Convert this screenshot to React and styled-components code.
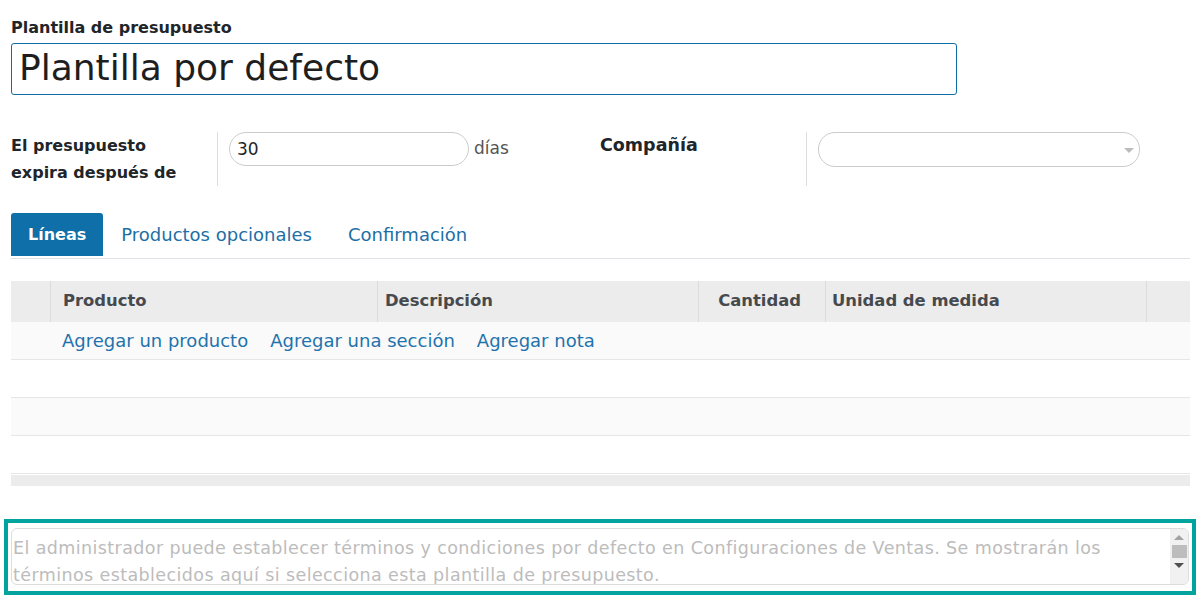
import styled, { createGlobalStyle } from "styled-components";

const GlobalStyle = createGlobalStyle`
  body {
    margin: 0;
    background: #fff;
    font-family: "DejaVu Sans", "Open Sans", sans-serif;
    color: #212529;
  }
`;

const Page = styled.div`
  padding: 17px 14px 0 11px;
`;

const FieldLabel = styled.div`
  font-size: 16px;
  font-weight: 700;
  line-height: 21px;
  margin-bottom: 5px;
`;

const NameInput = styled.div`
  box-sizing: border-box;
  width: 946px;
  height: 52px;
  border: 1px solid #0f6ea8;
  border-radius: 3px;
  padding: 0 7px;
  font-size: 36px;
  line-height: 48px;
  color: #1e1e1e;
`;

const SettingsRow = styled.div`
  display: flex;
  margin-top: 37px;
`;

const Group = styled.div`
  display: flex;
  width: ${(p) => p.width}px;
`;

const GroupLabel = styled.div`
  width: 206px;
  font-size: ${(p) => p.size || 16}px;
  font-weight: 700;
  line-height: 27px;
  white-space: nowrap;
`;

const GroupBody = styled.div`
  display: flex;
  align-items: flex-start;
  border-left: 1px solid #ddd;
  padding-left: 11px;
  min-height: ${(p) => p.sep}px;
`;

const Pill = styled.div`
  box-sizing: border-box;
  width: ${(p) => p.width}px;
  height: ${(p) => p.height}px;
  border: 1px solid #ccc;
  border-radius: 17px;
  padding: 0 7px;
  font-size: 17px;
  line-height: 32px;
  position: relative;
`;

const Caret = styled.span`
  position: absolute;
  right: 5px;
  top: 15px;
  border-left: 5px solid transparent;
  border-right: 5px solid transparent;
  border-top: 5px solid #bbb;
`;

const Unit = styled.span`
  font-size: 17px;
  color: #555;
  margin: 6px 0 0 5px;
`;

const Tabs = styled.div`
  display: flex;
  margin-top: 27px;
  border-bottom: 1px solid #dee2e6;
  height: 46px;
  box-sizing: border-box;
`;

const Tab = styled.div`
  height: 43px;
  padding: 0 ${(p) => (p.active ? 17 : 18)}px;
  font-size: ${(p) => (p.active ? 16 : 18)}px;
  line-height: 44px;
  border-radius: 3px 3px 0 0;
  white-space: nowrap;
  color: ${(p) => (p.active ? "#fff" : "#1d6fa6")};
  background: ${(p) => (p.active ? "#0f6fa8" : "transparent")};
  font-weight: ${(p) => (p.active ? 700 : 400)};
`;

const Table = styled.div`
  margin-top: 22px;
  width: 1179px;
`;

const cols = "39px 327px 321px 127px 321px 44px";

const HeadRow = styled.div`
  display: grid;
  grid-template-columns: ${cols};
  height: 41px;
  background: #ececec;
`;

const HeadCell = styled.div`
  border-left: ${(p) => (p.first ? "none" : "1px solid #dcdcdc")};
  font-size: 16.4px;
  font-weight: 700;
  color: #464a4f;
  line-height: 40px;
  padding: 0 ${(p) => (p.right ? "24px" : "4px")} 0 ${(p) => (p.right ? "0" : `${p.indent || 6}px`)};
  text-align: ${(p) => (p.right ? "right" : "left")};
  white-space: nowrap;
`;

const BodyRow = styled.div`
  display: flex;
  gap: 22px;
  height: 38px;
  box-sizing: border-box;
  border-bottom: 1px solid #e6e6e6;
  background: ${(p) => (p.shade ? "#fafafa" : "#fff")};
  padding-left: 51px;
`;

const AddLink = styled.span`
  font-size: 18px;
  line-height: 38px;
  color: #1f73ac;
  white-space: nowrap;
`;

const TableFoot = styled.div`
  height: 11px;
  background: #ececec;
  margin-top: 1px;
`;

const Highlight = styled.div`
  margin: 33px -6px 0 -7px;
  border: 4px solid #00a39d;
  padding: 5px 3px 6px 3px;
`;

const NoteBox = styled.div`
  display: flex;
  height: 57px;
  box-sizing: border-box;
  border: 1px solid #dcdcdc;
  border-radius: 6px;
  overflow: hidden;
`;

const NoteText = styled.div`
  flex: 1;
  font-size: 17.5px;
  letter-spacing: 0.4px;
  line-height: 27px;
  padding: 6px 8px 0 1px;
  color: #bcbcbc;
`;

const ScrollBar = styled.div`
  width: 18px;
  background: #f1f1f1;
  display: flex;
  flex-direction: column;
  align-items: center;
  padding-top: 6px;
  gap: 5px;
`;

const Arrow = styled.span`
  border-left: 5px solid transparent;
  border-right: 5px solid transparent;
  ${(p) => (p.up ? "border-bottom: 5px solid #a3a3a3;" : "border-top: 5px solid #505050;")}
`;

const Thumb = styled.span`
  width: 15px;
  height: 13px;
  background: #bdbdbd;
`;

export default function App() {
  return (
    <Page>
      <GlobalStyle />
      <FieldLabel>Plantilla de presupuesto</FieldLabel>
      <NameInput>Plantilla por defecto</NameInput>

      <SettingsRow>
        <Group width={589}>
          <GroupLabel>
            El presupuesto
            <br />
            expira después de
          </GroupLabel>
          <GroupBody sep={54}>
            <Pill width={240} height={34}>30</Pill>
            <Unit>días</Unit>
          </GroupBody>
        </Group>
        <Group width={540}>
          <GroupLabel size={17.5}>Compañía</GroupLabel>
          <GroupBody sep={45}>
            <Pill width={322} height={35}>
              <Caret />
            </Pill>
          </GroupBody>
        </Group>
      </SettingsRow>

      <Tabs>
        <Tab active>Líneas</Tab>
        <Tab>Productos opcionales</Tab>
        <Tab>Confirmación</Tab>
      </Tabs>

      <Table>
        <HeadRow>
          <HeadCell first />
          <HeadCell indent={12}>Producto</HeadCell>
          <HeadCell indent={7}>Descripción</HeadCell>
          <HeadCell right>Cantidad</HeadCell>
          <HeadCell indent={6}>Unidad de medida</HeadCell>
          <HeadCell />
        </HeadRow>
        <BodyRow shade>
          <AddLink>Agregar un producto</AddLink>
          <AddLink>Agregar una sección</AddLink>
          <AddLink>Agregar nota</AddLink>
        </BodyRow>
        <BodyRow />
        <BodyRow shade />
        <BodyRow />
        <TableFoot />
      </Table>

      <Highlight>
        <NoteBox>
          <NoteText>
            El administrador puede establecer términos y condiciones por defecto en Configuraciones de Ventas. Se mostrarán los
            términos establecidos aquí si selecciona esta plantilla de presupuesto.
          </NoteText>
          <ScrollBar>
            <Arrow up />
            <Thumb />
            <Arrow />
          </ScrollBar>
        </NoteBox>
      </Highlight>
    </Page>
  );
}
